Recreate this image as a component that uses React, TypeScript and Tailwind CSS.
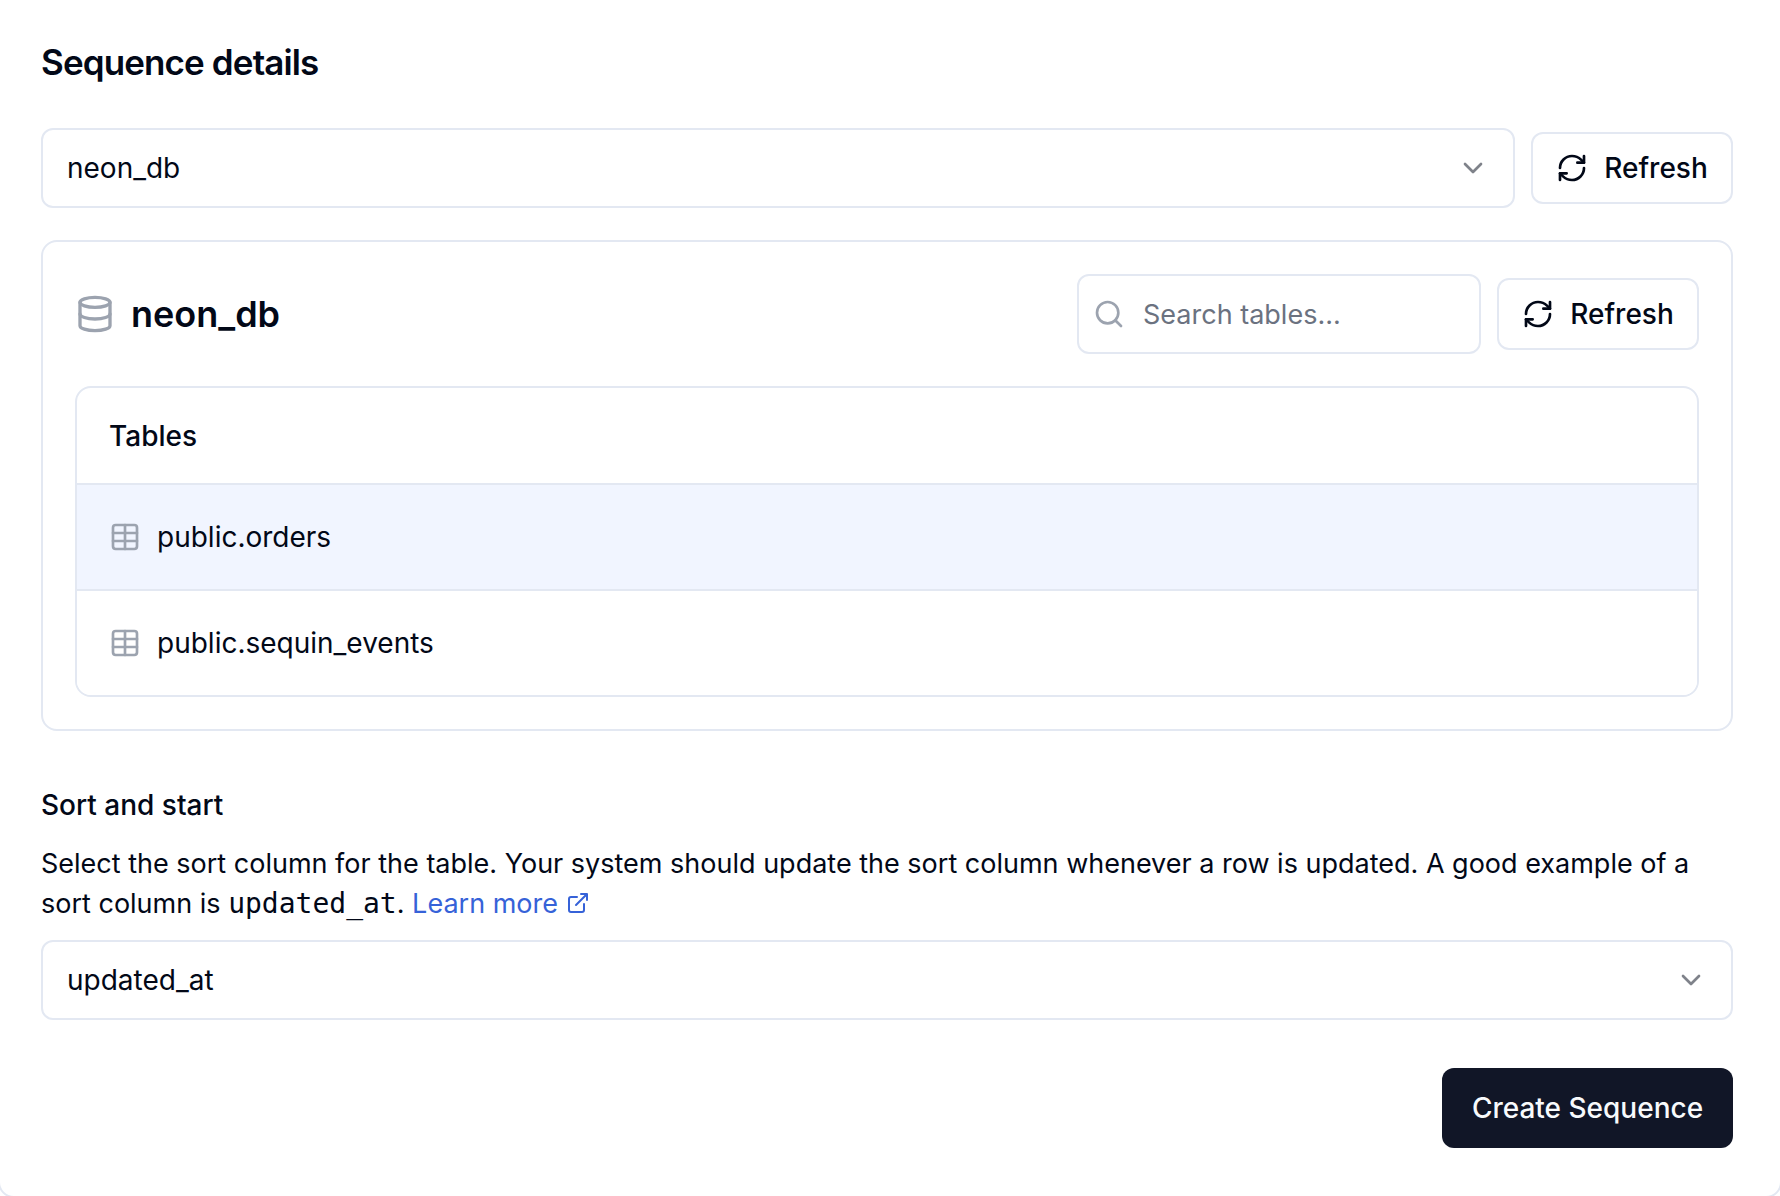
import { useState } from "react";
import type { ComponentProps } from "react";
import { ChevronDown, Database, RefreshCw, Search, Table } from "lucide-react";

const tables = ["public.orders", "public.sequin_events"];

function RefreshButton(props: ComponentProps<"button">) {
  return (
    <button
      type="button"
      className="flex h-[72px] w-[202px] shrink-0 items-center justify-center gap-4 rounded-xl border-2 border-[#e3e8f2] bg-white font-medium"
      {...props}
    >
      <RefreshCw className="size-8" />
      Refresh
    </button>
  );
}

function SelectBox({ label, options }: { label: string; options: string[] }) {
  return (
    <div className="relative min-w-0 grow">
      <select
        aria-label={label}
        className="block h-20 w-full appearance-none rounded-xl border-2 border-[#e3e8f2] bg-white px-6"
      >
        {options.map((option) => (
          <option key={option}>{option}</option>
        ))}
      </select>
      <ChevronDown className="pointer-events-none absolute top-6 right-[26px] size-8 opacity-50" />
    </div>
  );
}

function ExternalIcon() {
  return (
    <svg viewBox="0 0 24 24" fill="none" stroke="currentColor" strokeWidth="2" strokeLinecap="round" strokeLinejoin="round" className="ml-2 inline size-6 align-[-2px]" aria-hidden="true">
      <path d="M18 13v6a2 2 0 0 1-2 2H5a2 2 0 0 1-2-2V8a2 2 0 0 1 2-2h6M15 3h6v6M10 14 21 3" />
    </svg>
  );
}

export default function App() {
  const [query, setQuery] = useState("");
  const [selected, setSelected] = useState("public.orders");

  return (
    <div className="min-h-screen overflow-hidden bg-white font-['Inter',sans-serif] text-[28px] leading-10 text-[#020817]">
      <main className="-mx-0.5 -mt-5 -mb-0.5 rounded-2xl border-2 border-[#e3e8f2] pt-[58px] pr-[47px] pb-12 pl-[41px]">
        <h1 className="text-[35px] leading-[44px] font-semibold tracking-tight">Sequence details</h1>

        <div className="mt-11 flex items-center gap-4">
          <SelectBox label="Database" options={["neon_db"]} />
          <RefreshButton aria-label="Refresh databases" />
        </div>

        <section className="mt-8 rounded-2xl border-2 border-[#e3e8f2] p-8">
          <div className="flex items-center gap-4">
            <Database className="size-10 shrink-0 text-[#9ca3af]" />
            <h2 className="grow text-4xl font-semibold">neon_db</h2>
            <div className="relative w-[404px]">
              <Search className="absolute top-6 left-4 size-8 text-[#9ca3af]" />
              <input
                type="search"
                aria-label="Search tables"
                placeholder="Search tables..."
                value={query}
                onChange={(e) => setQuery(e.target.value)}
                className="block h-20 w-full rounded-xl border-2 border-[#e3e8f2] bg-white pr-6 pl-16 text-[27px] placeholder:text-[#6b7280]"
              />
            </div>
            <RefreshButton aria-label="Refresh tables" />
          </div>

          <div className="mt-8 overflow-hidden rounded-2xl border-2 border-[#e3e8f2]">
            <table className="w-full border-separate border-spacing-0 text-left">
              <thead>
                <tr>
                  <th className="h-[95px] px-8 font-medium">Tables</th>
                </tr>
              </thead>
              <tbody>
                {tables
                  .filter((name) => name.includes(query))
                  .map((name) => (
                    <tr key={name} className={name === selected ? "bg-[#f1f5ff]" : "bg-white"}>
                      <td className="h-[106px] border-t-2 border-[#e3e8f2] px-8">
                        <button
                          type="button"
                          onClick={() => setSelected(name)}
                          className="flex w-full items-center gap-4 text-left"
                        >
                          <Table className="size-8 shrink-0 text-[#9ca3af]" />
                          {name}
                        </button>
                      </td>
                    </tr>
                  ))}
              </tbody>
            </table>
          </div>
        </section>

        <section className="mt-[54px]">
          <h2 className="font-medium">Sort and start</h2>
          <p className="mt-[19px] text-[27px]">
            Select the sort column for the table. Your system should update the sort column whenever a row is updated. A
            good example of a sort column is{" "}
            <code className="font-['DejaVu_Sans_Mono',monospace] text-[28px] leading-8">updated_at</code>.{" "}
            <a href="#" className="text-[#3662d8]">
              Learn more
              <ExternalIcon />
            </a>
          </p>
          <div className="mt-4 flex">
            <SelectBox label="Sort column" options={["updated_at"]} />
          </div>
        </section>

        <div className="mt-12 flex justify-end">
          <button type="button" className="h-20 w-[291px] rounded-xl bg-[#111627] font-medium text-[#f8fafc]">
            Create Sequence
          </button>
        </div>
      </main>
    </div>
  );
}
